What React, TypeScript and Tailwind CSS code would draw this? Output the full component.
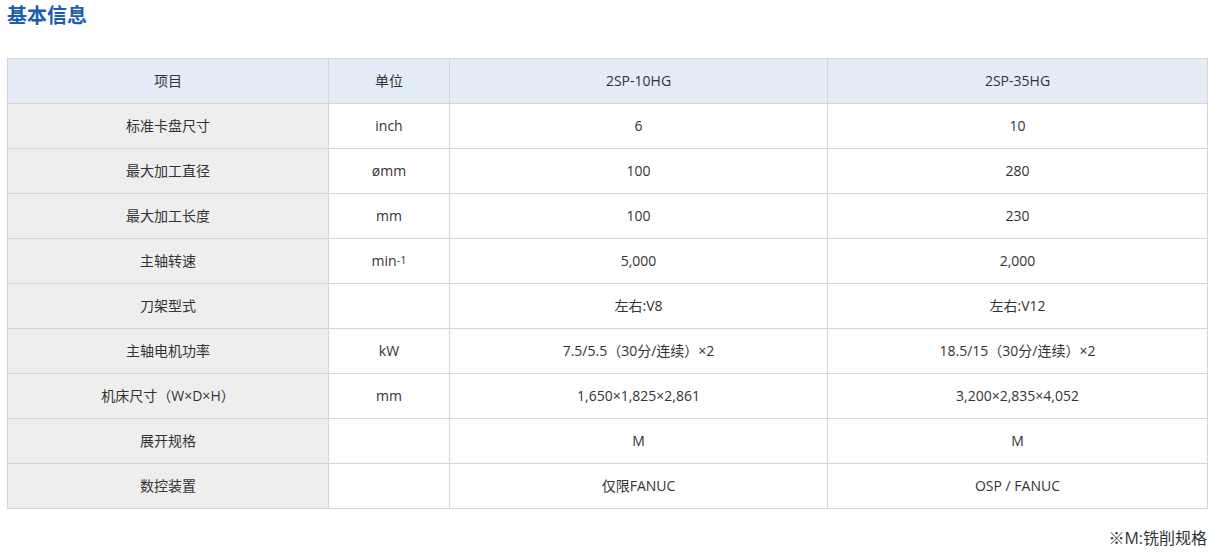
import React from "react";

const rows: { label: string; unit: React.ReactNode; a: string; b: string }[] = [
  { label: "标准卡盘尺寸", unit: "inch", a: "6", b: "10" },
  { label: "最大加工直径", unit: "ømm", a: "100", b: "280" },
  { label: "最大加工长度", unit: "mm", a: "100", b: "230" },
  {
    label: "主轴转速",
    unit: (
      <>
        min<sup className="text-[11px] relative -top-[2px]">-1</sup>
      </>
    ),
    a: "5,000",
    b: "2,000",
  },
  { label: "刀架型式", unit: "", a: "左右:V8", b: "左右:V12" },
  { label: "主轴电机功率", unit: "kW", a: "7.5/5.5（30分/连续）×2", b: "18.5/15（30分/连续）×2" },
  { label: "机床尺寸（W×D×H）", unit: "mm", a: "1,650×1,825×2,861", b: "3,200×2,835×4,052" },
  { label: "展开规格", unit: "", a: "M", b: "M" },
  { label: "数控装置", unit: "", a: "仅限FANUC", b: "OSP / FANUC" },
];

const cell = "border border-[#d6d6d6] h-[45px] text-center align-middle p-0 pb-[2px]";

const App = () => {
  return (
    <div
      className="bg-white w-[1218px] h-[556px] px-[7px] text-[#333] text-[14px]"
      style={{ fontFamily: '"Open Sans", "Noto Sans CJK SC", sans-serif' }}
    >
      {/* Title */}
      <h2 className="text-[20px] font-bold text-[#1d5dae] leading-[32px]">基本信息</h2>

      {/* Spec table */}
      <table className="mt-[26px] w-[1200px] border-collapse table-fixed">
        <colgroup>
          <col className="w-[321px]" />
          <col className="w-[121px]" />
          <col className="w-[378px]" />
          <col className="w-[380px]" />
        </colgroup>
        <thead>
          <tr className="bg-[#e3ecf7]">
            <th className={`${cell} font-normal`}>项目</th>
            <th className={`${cell} font-normal`}>单位</th>
            <th className={`${cell} font-normal`}>2SP-10HG</th>
            <th className={`${cell} font-normal`}>2SP-35HG</th>
          </tr>
        </thead>
        <tbody>
          {rows.map((r) => (
            <tr key={r.label}>
              <td className={`${cell} bg-[#eeeeee]`}>{r.label}</td>
              <td className={cell}>{r.unit}</td>
              <td className={cell}>{r.a}</td>
              <td className={cell}>{r.b}</td>
            </tr>
          ))}
        </tbody>
      </table>

      {/* Footnote */}
      <p className="w-[1200px] text-right text-[16px] mt-[17px] leading-[24px]">※M:铣削规格</p>
    </div>
  );
};

export default App;
